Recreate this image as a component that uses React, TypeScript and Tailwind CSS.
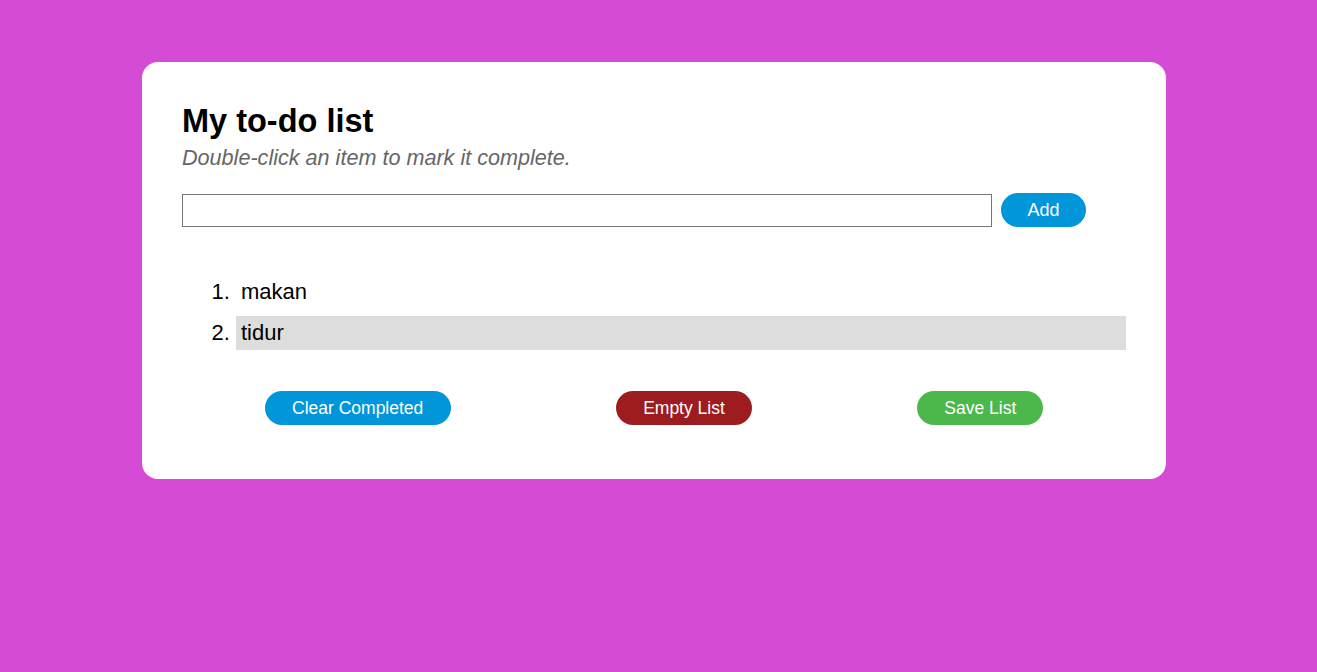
export default function App() {
  const items = [
    { text: 'makan', done: false },
    { text: 'tidur', done: true },
  ]

  return (
    <div className="min-h-screen bg-[#d64bd6] pt-[62px] font-['Liberation_Sans',Arial,sans-serif]">
      <div className="ml-[142px] w-[1024px] rounded-2xl bg-white px-10 pt-[40px] pb-[54px]">
        <h1 className="text-[32.5px] font-bold leading-[38px] text-black">My to-do list</h1>
        <p className="mt-[5px] text-[21.6px] italic leading-[26px] text-[#666]">
          Double-click an item to mark it complete.
        </p>

        <div className="mt-[22px] flex items-center gap-[9px]">
          <input
            type="text"
            className="h-[33px] w-[810px] border border-[#767676] px-1 text-[18px] outline-none"
          />
          <button className="h-[34px] w-[85px] rounded-full bg-[#0096d9] text-[18px] text-white">
            Add
          </button>
        </div>

        <ol className="mt-[48px] list-decimal pl-[54px] text-[22px] text-black">
          {items.map((item) => (
            <li
              key={item.text}
              className={`mb-[7px] pl-[5px] leading-[34px] ${item.done ? 'bg-[#dddddd]' : ''}`}
            >
              {item.text}
            </li>
          ))}
        </ol>

        <div className="mt-[41px] flex justify-around">
          <button className="h-[34px] w-[186px] rounded-full bg-[#0096d9] text-[17.5px] text-white">
            Clear Completed
          </button>
          <button className="h-[34px] w-[136px] rounded-full bg-[#9c1c20] text-[17.5px] text-white">
            Empty List
          </button>
          <button className="h-[34px] w-[126px] rounded-full bg-[#4cb84c] text-[17.5px] text-white">
            Save List
          </button>
        </div>
      </div>
    </div>
  )
}
